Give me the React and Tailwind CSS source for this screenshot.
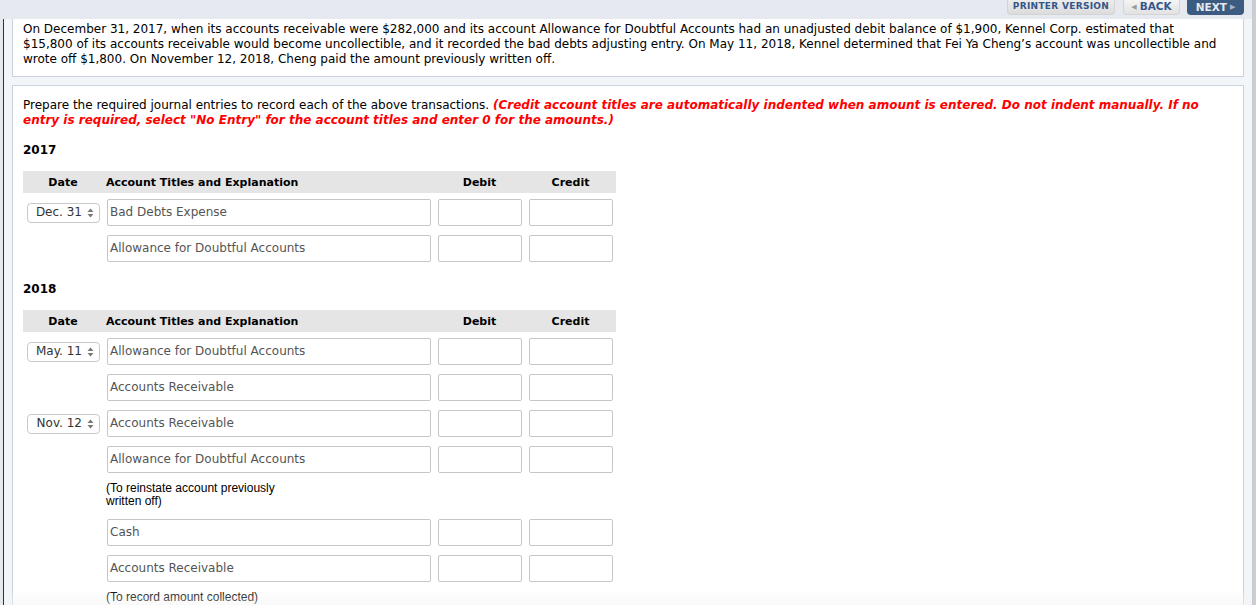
import React from 'react';

const font = { fontFamily: '"DejaVu Sans", Verdana, sans-serif' };

const SelectArrows = () => (
  <svg width="7" height="10" viewBox="0 0 7 10" className="ml-[5px]">
    <path d="M3.5 0.5 L6.5 4 L0.5 4 Z" fill="#777" />
    <path d="M3.5 9.5 L6.5 6 L0.5 6 Z" fill="#777" />
  </svg>
);

const DateSelect = ({ label }) => (
  <div className="ml-[4px] w-[73px] h-[20px] flex items-center justify-end pr-[5px] border border-[#c9c9c9] rounded-[4px] bg-white text-[12px] text-[#333]">
    <span>{label}</span>
    <SelectArrows />
  </div>
);

const Field = ({ w, value }) => (
  <div
    className={`ml-[4px] h-[27px] flex items-center pl-[2px] border border-[#c6c6c6] rounded-[2px] bg-white text-[12px] text-[#555] ${w}`}
  >
    {value}
  </div>
);

const Row = ({ date, title }) => (
  <div className="grid grid-cols-[80px_331px_91px_91px] items-center h-[27px]">
    <div>{date && <DateSelect label={date} />}</div>
    <Field w="w-[324px]" value={title} />
    <Field w="w-[84px]" />
    <Field w="w-[84px]" />
  </div>
);

const Note = ({ children }) => (
  <div
    className="pl-[83px] h-[28px] text-[12px] leading-[13px] text-black"
    style={{ fontFamily: '"Liberation Sans", Arial, sans-serif' }}
  >
    {children}
  </div>
);

const Header = () => (
  <div className="grid grid-cols-[80px_331px_91px_91px] items-center h-[22px] bg-[#e5e5e5] text-[11px] font-bold text-black mb-[6px]">
    <div className="text-center">Date</div>
    <div className="pl-[3px]">Account Titles and Explanation</div>
    <div className="text-center">Debit</div>
    <div className="text-center">Credit</div>
  </div>
);

export default function App() {
  return (
    <div className="relative w-[1256px] h-[605px] overflow-hidden flex" style={font}>
      <div className="w-[1252px] flex flex-col">
        {/* top bar */}
        <div className="h-[19px] shrink-0 bg-[#e6e9ef] flex justify-end pr-[8px]">
          <div className="w-[108px] h-[15px] flex items-center justify-center rounded-b-[4px] border border-t-0 border-[#d4d4d4] bg-gradient-to-b from-[#ececec] to-[#dcdcdc] text-[9px] font-bold text-[#34578a] tracking-[0.3px]">
            PRINTER VERSION
          </div>
          <div className="ml-[8px] w-[57px] h-[15px] flex items-center justify-center rounded-b-[4px] border border-t-0 border-[#d4d4d4] bg-gradient-to-b from-[#f4f4f4] to-[#e2e2e2] text-[10.5px] font-bold text-[#34578a]">
            <span className="text-[#9a9a9a] text-[7px] mr-[3px]">◀</span>BACK
          </div>
          <div className="ml-[7px] w-[57px] h-[15px] flex items-center justify-center rounded-b-[4px] bg-[#3c5b81] text-[10.5px] font-bold text-[#e4e9f0]">
            NEXT<span className="text-[#a9b5c6] text-[7px] ml-[3px]">▶</span>
          </div>
        </div>

        <div className="flex flex-1 min-h-0">
          <div className="w-[3px] bg-[#e6e9ef]" />
          <div className="w-[1px] bg-[#333]" />
          <div className="flex-1 bg-[#f3f6f9] px-[8px] flex flex-col text-[12px] leading-[15px] text-black">
            {/* problem statement */}
            <div className="border border-t-0 border-[#c9d3df] bg-white pl-[10px] pt-[3px] pb-[9px]">
              On December 31, 2017, when its accounts receivable were $282,000 and its account Allowance for Doubtful Accounts had an unadjusted debit balance of $1,900, Kennel Corp. estimated that
              <br />
              $15,800 of its accounts receivable would become uncollectible, and it recorded the bad debts adjusting entry. On May 11, 2018, Kennel determined that Fei Ya Cheng’s account was uncollectible and
              <br />
              wrote off $1,800. On November 12, 2018, Cheng paid the amount previously written off.
            </div>

            {/* question */}
            <div className="mt-[8px] flex-1 border border-b-0 border-[#c9d3df] bg-white pl-[10px] pt-[12px]">
              <div>
                Prepare the required journal entries to record each of the above transactions.{' '}
                <span className="font-bold italic text-[#ff0000]">
                  (Credit account titles are automatically indented when amount is entered. Do not indent manually. If no
                </span>
                <br />
                <span className="font-bold italic text-[#ff0000]">
                  entry is required, select "No Entry" for the account titles and enter 0 for the amounts.)
                </span>
              </div>

              <div className="mt-[15px] mb-[13px] font-bold">2017</div>
              <div className="w-[593px]">
                <Header />
                <div className="flex flex-col gap-[9px]">
                  <Row date="Dec. 31" title="Bad Debts Expense" />
                  <Row title="Allowance for Doubtful Accounts" />
                </div>
              </div>

              <div className="mt-[20px] mb-[13px] font-bold">2018</div>
              <div className="w-[593px]">
                <Header />
                <div className="flex flex-col gap-[9px]">
                  <Row date="May. 11" title="Allowance for Doubtful Accounts" />
                  <Row title="Accounts Receivable" />
                  <Row date="Nov. 12" title="Accounts Receivable" />
                  <Row title="Allowance for Doubtful Accounts" />
                  <Note>
                    (To reinstate account previously
                    <br />
                    written off)
                  </Note>
                  <Row title="Cash" />
                  <Row title="Accounts Receivable" />
                  <Note>(To record amount collected)</Note>
                </div>
              </div>
            </div>
          </div>
        </div>
      </div>
      <div className="w-[4px] border-l border-[#c3cbd6] bg-[#cecece]" />

      {/* faint fade at the bottom edge */}
      <div className="pointer-events-none absolute left-[4px] right-[4px] bottom-0 h-[16px] bg-gradient-to-b from-transparent to-[#f3f3f3]/50" />
    </div>
  );
}
